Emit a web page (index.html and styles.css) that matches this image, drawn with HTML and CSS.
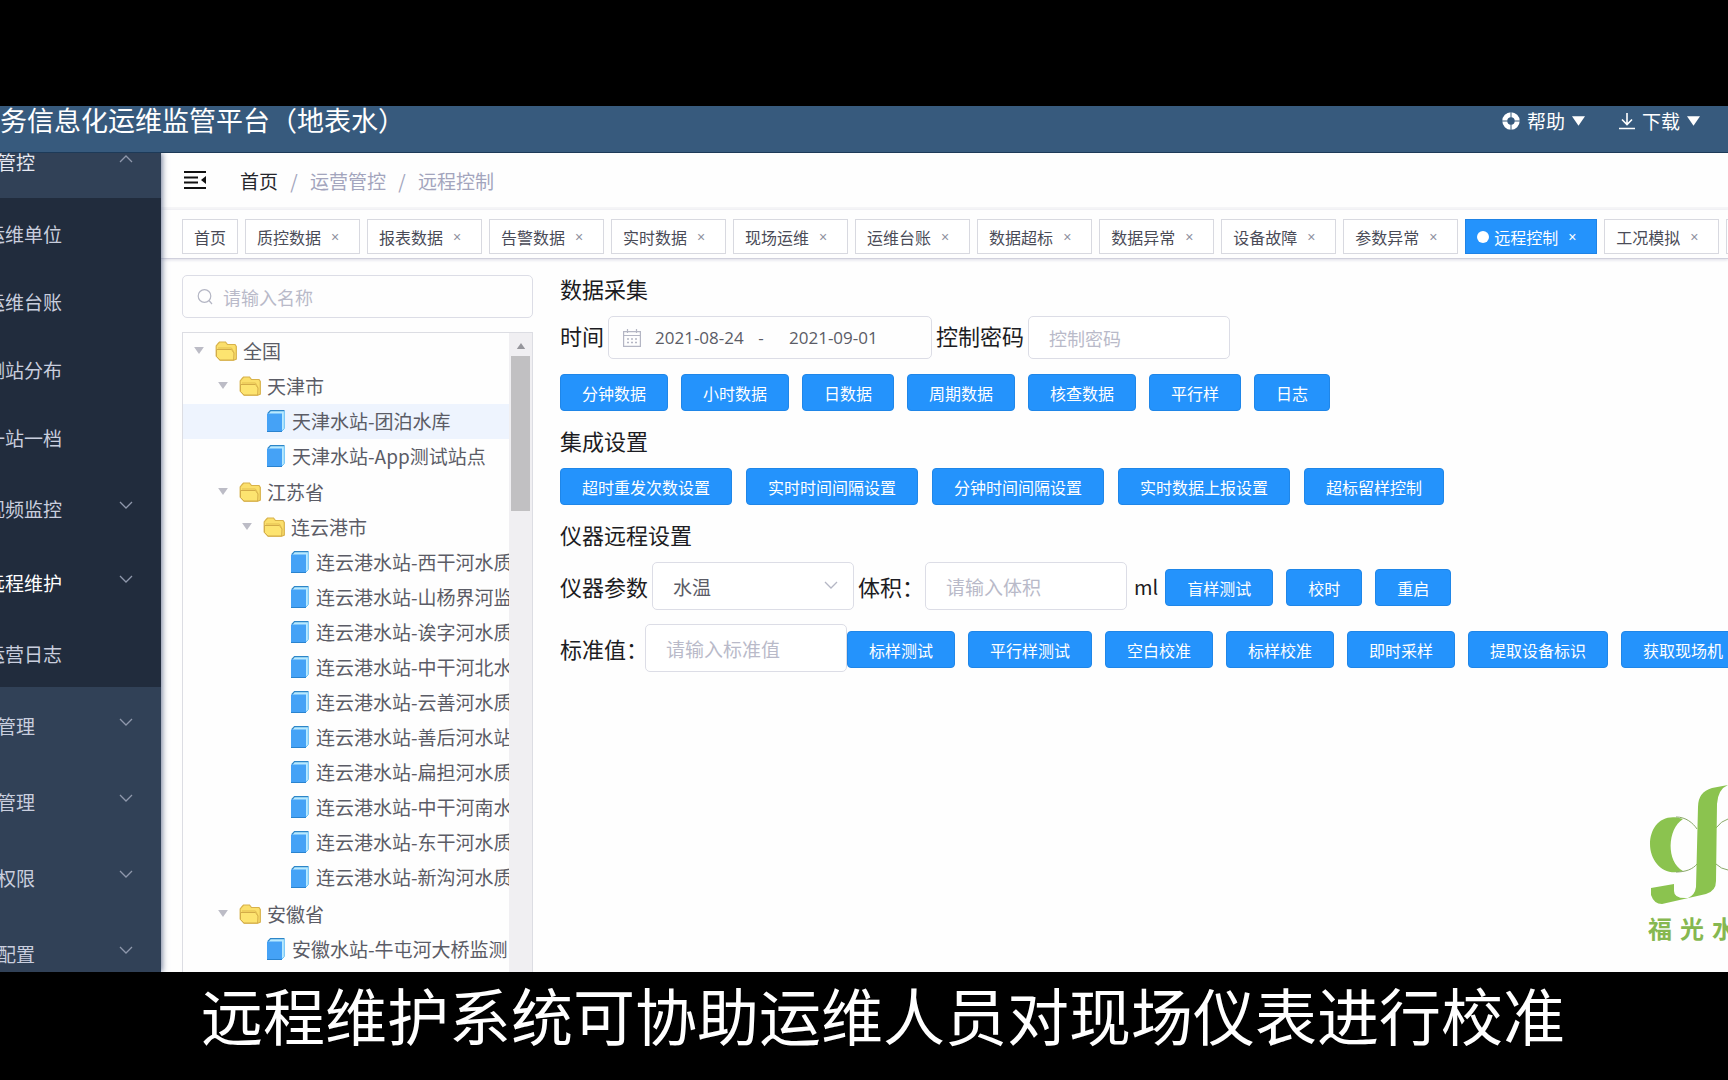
FILE: index.html
```html
<!DOCTYPE html>
<html lang="zh-CN">
<head>
<meta charset="utf-8">
<title>水务信息化运维监管平台（地表水）</title>
<link rel="stylesheet" href="styles.css">
</head>
<body>
<svg class="sprite" aria-hidden="true">
  <symbol id="chevron" viewBox="0 0 14 8"><path d="M1 1l6 6 6-6" fill="none" stroke="currentColor" stroke-width="1.3"/></symbol>
  <symbol id="caret" viewBox="0 0 14 10"><path d="M0 0h14L7 10z" fill="currentColor"/></symbol>
  <symbol id="folder" viewBox="0 0 22 20">
    <path d="M1.200 15V5l2-2.500L4.500 1h6L12.500 3.500H20l1.300 2V18l-2.500 1.200H5z" fill="#fbdf6b" stroke="#d8b24a" stroke-width="1.200"/>
    <path d="M1.500 8.500h15l2.500 3.500-.3 7H5L1.500 15.500z" fill="#fde470" stroke="#d3ac48"/>
    <path d="M3 7h13.500l2.500 4.500" fill="none" stroke="#e3bf50"/>
  </symbol>
  <symbol id="book" viewBox="0 0 18 22">
    <path d="M1 3.500L3.500.8h13.700v18L15 21z" fill="#b9eaff"/>
    <path d="M.8 3.500L3.500.7h14" fill="none" stroke="#2d86c8" stroke-width="1.200"/>
    <path d="M17.300 1v17.500L15 21" fill="none" stroke="#63bdf5"/>
    <path d="M0 3.500h15V22H0z" fill="#45a2f6"/>
    <path d="M0 21.500h15" stroke="#2a83cf"/>
  </symbol>
</svg>

<div class="letterbox"></div>

<div class="app">
  <header class="header">
    <h1 class="title">务信息化运维监管平台（地表水）</h1>
    <div class="tools">
      <button class="tool" type="button">
        <svg width="18" height="18" viewBox="0 0 18 18"><circle cx="9" cy="9" r="6.200" fill="none" stroke="#fff" stroke-width="5"/><path d="M9 0v6M9 12v6M0 9h6M12 9h6" stroke="#365a7d" stroke-width="1"/></svg>
        帮助
        <svg class="caret" width="13" height="10"><use href="#caret"/></svg>
      </button>
      <button class="tool" type="button">
        <svg width="16" height="18" viewBox="0 0 16 18"><path d="M8 1v11M3 7.500l5 5 5-5M0 16.500h16" fill="none" stroke="#fff" stroke-width="1.600"/></svg>
        下载
        <svg class="caret" width="13" height="10"><use href="#caret"/></svg>
      </button>
    </div>
  </header>

  <div class="body">
    <aside class="sidebar">
      <nav class="menu">
        <a class="item top first" href="#">管控<svg class="chev up"><use href="#chevron"/></svg></a>
        <div class="submenu">
          <a class="item leaf" href="#">运维单位</a>
          <a class="item leaf" href="#">运维台账</a>
          <a class="item leaf" href="#">测站分布</a>
          <a class="item leaf" href="#">一站一档</a>
          <a class="item branch" href="#">视频监控<svg class="chev"><use href="#chevron"/></svg></a>
          <a class="item branch current" href="#">远程维护<svg class="chev"><use href="#chevron"/></svg></a>
          <a class="item leaf" href="#">运营日志</a>
        </div>
        <a class="item top" href="#">管理<svg class="chev"><use href="#chevron"/></svg></a>
        <a class="item top" href="#">管理<svg class="chev"><use href="#chevron"/></svg></a>
        <a class="item top" href="#">权限<svg class="chev"><use href="#chevron"/></svg></a>
        <a class="item top" href="#">配置<svg class="chev"><use href="#chevron"/></svg></a>
      </nav>
    </aside>

    <main class="main">
      <div class="crumbs">
        <button class="fold" type="button" aria-label="收起菜单">
          <svg width="22" height="18" viewBox="0 0 22 18"><path d="M0 1h22M0 6.500h14M0 11.500h14M0 17h22" stroke="#111" stroke-width="2"/><path d="M22 5v8l-5-4z" fill="#111"/></svg>
        </button>
        <a class="home" href="#">首页</a><span class="slash">/</span>
        <a href="#">运营管控</a><span class="slash">/</span>
        <span>远程控制</span>
      </div>

      <div class="tabs">
        <a class="tab" href="#">首页</a>
        <a class="tab" href="#">质控数据<span class="x">×</span></a>
        <a class="tab" href="#">报表数据<span class="x">×</span></a>
        <a class="tab" href="#">告警数据<span class="x">×</span></a>
        <a class="tab" href="#">实时数据<span class="x">×</span></a>
        <a class="tab" href="#">现场运维<span class="x">×</span></a>
        <a class="tab" href="#">运维台账<span class="x">×</span></a>
        <a class="tab" href="#">数据超标<span class="x">×</span></a>
        <a class="tab" href="#">数据异常<span class="x">×</span></a>
        <a class="tab" href="#">设备故障<span class="x">×</span></a>
        <a class="tab" href="#">参数异常<span class="x">×</span></a>
        <a class="tab active" href="#"><span class="dot"></span>远程控制<span class="x">×</span></a>
        <a class="tab" href="#">工况模拟<span class="x">×</span></a>
        <a class="tab" href="#" aria-label="更多"></a>
      </div>

      <div class="content">
        <section class="stations">
          <label class="search">
            <svg width="16" height="16" viewBox="0 0 16 16"><circle cx="7.500" cy="7" r="6.300" fill="none" stroke="#b4b6c4" stroke-width="1.200"/><path d="M12 11.500l3 3.500" stroke="#b4b6c4" stroke-width="1.200"/></svg>
            <input type="text" placeholder="请输入名称" aria-label="请输入名称">
          </label>
          <div class="treebox">
            <ul class="tree">
              <li><div class="node"><svg class="arrow"><use href="#caret"/></svg><svg class="folder"><use href="#folder"/></svg>全国</div>
                <ul>
                  <li><div class="node"><svg class="arrow"><use href="#caret"/></svg><svg class="folder"><use href="#folder"/></svg>天津市</div>
                    <ul>
                      <li><div class="node selected"><svg class="book"><use href="#book"/></svg>天津水站-团泊水库</div></li>
                      <li><div class="node"><svg class="book"><use href="#book"/></svg>天津水站-App测试站点</div></li>
                    </ul>
                  </li>
                  <li><div class="node"><svg class="arrow"><use href="#caret"/></svg><svg class="folder"><use href="#folder"/></svg>江苏省</div>
                    <ul>
                      <li><div class="node"><svg class="arrow"><use href="#caret"/></svg><svg class="folder"><use href="#folder"/></svg>连云港市</div>
                        <ul>
                          <li><div class="node"><svg class="book"><use href="#book"/></svg>连云港水站-西干河水质</div></li>
                          <li><div class="node"><svg class="book"><use href="#book"/></svg>连云港水站-山杨界河监</div></li>
                          <li><div class="node"><svg class="book"><use href="#book"/></svg>连云港水站-诶字河水质</div></li>
                          <li><div class="node"><svg class="book"><use href="#book"/></svg>连云港水站-中干河北水</div></li>
                          <li><div class="node"><svg class="book"><use href="#book"/></svg>连云港水站-云善河水质</div></li>
                          <li><div class="node"><svg class="book"><use href="#book"/></svg>连云港水站-善后河水站</div></li>
                          <li><div class="node"><svg class="book"><use href="#book"/></svg>连云港水站-扁担河水质</div></li>
                          <li><div class="node"><svg class="book"><use href="#book"/></svg>连云港水站-中干河南水</div></li>
                          <li><div class="node"><svg class="book"><use href="#book"/></svg>连云港水站-东干河水质</div></li>
                          <li><div class="node"><svg class="book"><use href="#book"/></svg>连云港水站-新沟河水质</div></li>
                        </ul>
                      </li>
                    </ul>
                  </li>
                  <li><div class="node"><svg class="arrow"><use href="#caret"/></svg><svg class="folder"><use href="#folder"/></svg>安徽省</div>
                    <ul>
                      <li><div class="node"><svg class="book"><use href="#book"/></svg>安徽水站-牛屯河大桥监测</div></li>
                    </ul>
                  </li>
                </ul>
              </li>
            </ul>
            <div class="scrollbar"><svg class="scroll-up"><use href="#caret"/></svg><div class="thumb"></div></div>
          </div>
        </section>

        <section class="panel">
          <h2>数据采集</h2>
          <div class="row fields first-row">
            <label for="from">时间</label>
            <div class="range">
              <svg width="18" height="18" viewBox="0 0 18 18"><path d="M.6 2.600h16.800v14.800H.6zM.6 6.500h16.800M4.500 0v4M13.500 0v4" fill="none" stroke="#b4b6c4" stroke-width="1.200"/><path d="M4 10h10M4 13.500h10" stroke="#b4b6c4" stroke-width="1.500" stroke-dasharray="2 2"/></svg>
              <input id="from" type="text" value="2021-08-24">
              <span>-</span>
              <input type="text" value="2021-09-01" aria-label="结束日期">
            </div>
            <label for="pwd">控制密码</label>
            <input id="pwd" class="field short" type="text" placeholder="控制密码">
          </div>
          <div class="row buttons compact">
            <button type="button">分钟数据</button>
            <button type="button">小时数据</button>
            <button type="button">日数据</button>
            <button type="button">周期数据</button>
            <button type="button">核查数据</button>
            <button type="button">平行样</button>
            <button type="button">日志</button>
          </div>
          <h2>集成设置</h2>
          <div class="row buttons">
            <button type="button">超时重发次数设置</button>
            <button type="button">实时时间间隔设置</button>
            <button type="button">分钟时间间隔设置</button>
            <button type="button">实时数据上报设置</button>
            <button type="button">超标留样控制</button>
          </div>
          <h2>仪器远程设置</h2>
          <div class="row fields">
            <label for="param">仪器参数</label>
            <div class="select">
              <select id="param" class="field"><option>水温</option></select>
              <svg class="chev"><use href="#chevron"/></svg>
            </div>
            <label class="colon" for="vol">体积：</label>
            <input id="vol" class="field" type="text" placeholder="请输入体积">
            <span class="unit">ml</span>
            <div class="buttons compact">
              <button type="button">盲样测试</button>
              <button type="button">校时</button>
              <button type="button">重启</button>
            </div>
          </div>
          <div class="row fields tight">
            <label class="colon" for="std">标准值：</label>
            <input id="std" class="field" type="text" placeholder="请输入标准值">
            <div class="buttons compact">
              <button type="button">标样测试</button>
              <button type="button">平行样测试</button>
              <button type="button">空白校准</button>
              <button type="button">标样校准</button>
              <button type="button">即时采样</button>
              <button type="button">提取设备标识</button>
              <button type="button">获取现场机</button>
            </div>
          </div>
        </section>
      </div>

      <div class="brand">
        <svg width="80" height="122" viewBox="48 25 80 122">
          <path d="M83 60C62 53 50 68 50 85s13 33 33 27C66 103 67 70 83 60z" fill="#8bc34f"/>
          <path d="M76 58c10 0 17 6 21 12M76 113c10 0 17-3 21-8M116 69q5-7 12-9M116 105q5 5 12 6" fill="none" stroke="#8aa86a"/>
          <path d="M128 26l-16 3q-14 4-14 19l-2 80q-1 8-8 11-14 1-14-7v-7l-23 4v7q3 9 11 9l44-10q10-3 10-13l1-77q1-15 11-19z" fill="#8bc34f"/>
        </svg>
        <div class="brand-name"><span>福</span><span>光</span><span>水</span></div>
      </div>
    </main>
  </div>
</div>

<p class="caption">远程维护系统可协助运维人员对现场仪表进行校准</p>
</body>
</html>
```
FILE: styles.css
```css
* { box-sizing: border-box; }

body {
  margin: 0;
  height: 100vh;
  display: flex;
  flex-direction: column;
  overflow: hidden;
  background: #000;
  color: #1c1c22;
  font-family: "Noto Sans CJK SC", sans-serif;
  font-size: 19px;
}

a { color: inherit; text-decoration: none; }
button, input, select { font: inherit; color: inherit; margin: 0; }
ul { list-style: none; margin: 0; padding: 0; }
svg { flex: none; }

.sprite { position: absolute; width: 0; height: 0; }
.letterbox { flex: none; height: 106px; }

.app {
  flex: 1;
  min-height: 0;
  display: flex;
  flex-direction: column;
  background: #fff;
}

.header {
  flex: none;
  height: 47px;
  display: flex;
  justify-content: space-between;
  align-items: flex-start;
  padding-right: 28px;
  background: #375a7d;
  border-bottom: 1px solid #1d3a58;
  color: #fff;
}
.title { margin: 0; font-size: 27px; line-height: 28px; font-weight: 400; }
.tools { display: flex; gap: 34px; }
.tool {
  display: flex;
  align-items: center;
  gap: 7px;
  padding: 0;
  border: 0;
  background: none;
  line-height: 30px;
}

.body { flex: 1; min-height: 0; display: flex; overflow: hidden; }

.sidebar {
  flex: none;
  width: 161px;
  overflow: hidden;
  background: #314157;
  color: #c9cede;
  z-index: 1;
  box-shadow: 1px 0 6px #6a7694;
}
.menu { margin-left: -14px; }
.item { display: flex; align-items: center; padding-right: 28px; white-space: nowrap; }
.top { height: 76px; padding-left: 11px; }
.first { margin-top: -28px; height: 73px; color: #e6e9f2; }
.leaf { height: 68px; }
.branch { height: 74px; }
.current { color: #fff; }
.submenu { padding-top: 1px; margin-left: -14px; padding-left: 14px; background: #212c3d; }
.chev { width: 14px; height: 8px; margin-left: auto; margin-bottom: 6px; color: #8f98ac; }
.up { transform: rotate(180deg); }

.main {
  position: relative;
  flex: 1;
  min-width: 0;
  display: flex;
  flex-direction: column;
  overflow: hidden;
  background: #fefefe;
}

.crumbs {
  flex: none;
  height: 57px;
  display: flex;
  align-items: center;
  padding-left: 23px;
  border-bottom: 3px solid #f5f5f7;
  color: #a3a5bd;
}
.fold { display: flex; padding: 0; margin-right: 34px; border: 0; background: none; }
.home { color: #26262c; }
.slash { width: 32px; text-align: center; }

.tabs {
  flex: none;
  display: flex;
  gap: 7px;
  padding: 9px 0 4px 21px;
  border-bottom: 1px solid #d0d0dc;
  box-shadow: 0 1px 3px #dcdce6;
  font-size: 16px;
}
.tab {
  flex: none;
  height: 35px;
  display: flex;
  align-items: center;
  padding: 0 11px;
  border: 1px solid #d8d9e0;
  background: #fff;
  color: #4a4b57;
}
.tab.active { background: #2493fc; border-color: #1f83e6; color: #fff; }
.x {
  width: 17px;
  margin-left: 10px;
  padding-top: 1px;
  color: #8f909e;
  font-family: "Liberation Sans", sans-serif;
  font-size: 14px;
}
.active .x { color: #fff; }
.dot { width: 12px; height: 12px; margin-right: 5px; border-radius: 50%; background: #fff; }

.content { flex: 1; min-height: 0; display: flex; gap: 27px; padding-left: 21px; }

.stations { flex: none; width: 351px; display: flex; flex-direction: column; padding-top: 16px; }
.search {
  flex: none;
  height: 43px;
  display: flex;
  align-items: center;
  gap: 10px;
  padding: 0 14px;
  border: 1px solid #dcdde6;
  border-radius: 5px;
  font-size: 18px;
}
.search input, .range input { border: 0; padding: 0; outline: 0; background: none; min-width: 0; }
::placeholder { color: #b9bac9; opacity: 1; }

.treebox {
  flex: 1;
  min-height: 0;
  display: flex;
  margin-top: 14px;
  border: 1px solid #dcdde3;
  border-bottom: 0;
  overflow: hidden;
}
.tree { flex: 1; min-width: 0; overflow: hidden; padding-top: 1px; color: #5b5c66; }
.tree ul ul { padding-bottom: 1px; }
.node { height: 35px; display: flex; align-items: center; white-space: nowrap; padding: 0 0 2px 10px; }
.tree ul .node { padding-left: 34px; }
.tree ul ul .node { padding-left: 58px; }
.tree ul ul ul .node { padding-left: 82px; }
.tree .node .book { margin-left: 26px; }
.selected { background: #eef4fe; }
.arrow { width: 10px; height: 7px; margin: 0 11px 0 1px; color: #bcbcc6; }
.folder { width: 22px; height: 20px; margin-right: 6px; }
.book { width: 18px; height: 22px; margin-right: 7px; }

.scrollbar {
  flex: none;
  width: 23px;
  display: flex;
  flex-direction: column;
  align-items: center;
  background: #f0eff2;
}
.scroll-up { width: 10px; height: 6px; margin: 10px 0 7px; color: #96969c; transform: rotate(180deg); }
.thumb { width: 19px; height: 155px; background: #c1c0c2; }

.panel { flex: 1; min-width: 0; overflow: hidden; padding-top: 14px; font-size: 22px; }
.panel h2 { margin: 14px 0 13px; font-size: 22px; font-weight: 400; line-height: 30px; }
.panel h2:first-child { margin-top: 0; }
.row { display: flex; }
.fields { align-items: center; gap: 4px; margin-bottom: 14px; white-space: nowrap; }
.first-row { height: 43px; margin-bottom: 15px; }
.first-row label { padding-bottom: 6px; }
.colon { margin-right: -3px; }
.fields.tight { gap: 0; }
.field {
  flex: none;
  width: 202px;
  height: 48px;
  padding: 0 20px;
  border: 1px solid #dcdde6;
  border-radius: 5px;
  background: #fff;
  font-size: 19px;
  color: #5b5c66;
}
.short { height: 43px; font-size: 18px; }
.range {
  width: 324px;
  height: 43px;
  display: flex;
  align-items: center;
  padding-left: 14px;
  border: 1px solid #dcdde6;
  border-radius: 5px;
  font-family: "Open Sans", "Noto Sans CJK SC", sans-serif;
  font-size: 17px;
  color: #5b5c66;
}
.range input { width: 92px; margin-left: 14px; }
.range span { width: 28px; text-align: center; }
.select { position: relative; display: flex; }
.select select { appearance: none; }
.select .chev { position: absolute; right: 16px; top: 19px; margin: 0; color: #b4b6c4; }
.unit { font-size: 20px; margin-left: 3px; }

.buttons { display: flex; gap: 14px; }
.compact { gap: 13px; }
.fields .buttons { margin-left: 3px; padding-top: 3px; }
.fields.tight .buttons { margin-left: 0; }
.buttons button {
  flex: none;
  height: 37px;
  padding: 0 21px;
  border: 1px solid #1f86e8;
  border-radius: 4px;
  background: #2493fc;
  color: #fff;
  font-size: 16px;
  line-height: 24px;
}

.brand { position: absolute; right: 0; bottom: 26px; width: 80px; overflow: hidden; }
.brand svg { display: block; }
.brand-name {
  display: flex;
  gap: 8px;
  padding-top: 4px;
  color: #86b850;
  font-size: 24px;
  line-height: 36px;
  font-weight: 700;
}

.caption {
  flex: none;
  height: 108px;
  margin: 0;
  padding-left: 38px;
  color: #fff;
  font-size: 62px;
  line-height: 84px;
  text-align: center;
  white-space: nowrap;
}
```
